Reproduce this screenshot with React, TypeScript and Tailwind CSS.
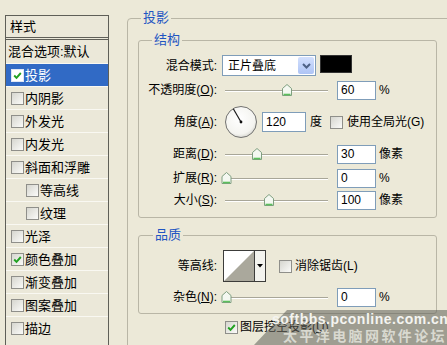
import React from 'react';

function Check({ checked, sel }: { checked?: boolean; sel?: boolean }) {
  return (
    <span className={sel ? 'flex w-[13px] h-[13px] shrink-0 items-center justify-center border border-[#dfe6f5] bg-white' : 'flex w-[13px] h-[13px] shrink-0 items-center justify-center border border-[#8f8f8a] bg-gradient-to-br from-[#d6d6cf] to-[#fbfbf9]'}>
      {checked && (
        <svg width="9" height="9" viewBox="0 0 9 9">
          <path d="M1.2 4.5 L3.5 6.8 L7.8 2" stroke="#21a121" strokeWidth="1.9" fill="none" />
        </svg>
      )}
    </span>
  );
}

function Slider({ pos }: { pos: number }) {
  const cx = pos;
  return (
    <svg width="113" height="22" viewBox="0 0 113 22" className="shrink-0">
      <line x1="5" y1="11.5" x2="108" y2="11.5" stroke="#a8a698" strokeWidth="1" />
      <line x1="5" y1="12.5" x2="108" y2="12.5" stroke="#ffffff" strokeWidth="1" />
      <polygon
        points={`${cx},5.5 ${cx + 4.5},9.5 ${cx + 4.5},16.5 ${cx - 4.5},16.5 ${cx - 4.5},9.5`}
        fill="#f4f8f1"
        stroke="#7f9f80"
        strokeWidth="1"
      />
      <line x1={cx - 3.5} y1="15.5" x2={cx + 3.5} y2="15.5" stroke="#5cbf5c" strokeWidth="1.6" />
    </svg>
  );
}

function Field({ v, w }: { v: string; w?: string }) {
  return (
    <div className={`${w ?? 'w-[39px] h-[19px]'} shrink-0 border border-[#7f9db9] bg-white flex items-center pl-[3px] text-[12px] leading-none`}>
      {v}
    </div>
  );
}

function Label({ children }: { children: React.ReactNode }) {
  return <div className="w-[78px] shrink-0 text-right text-[12px] leading-none whitespace-nowrap">{children}</div>;
}

const items: { t: string; c?: boolean; sel?: boolean; ind?: boolean }[] = [
  { t: '投影', c: true, sel: true },
  { t: '内阴影' },
  { t: '外发光' },
  { t: '内发光' },
  { t: '斜面和浮雕' },
  { t: '等高线', ind: true },
  { t: '纹理', ind: true },
  { t: '光泽' },
  { t: '颜色叠加', c: true },
  { t: '渐变叠加' },
  { t: '图案叠加' },
  { t: '描边' },
];

export default function App() {
  return (
    <div className="relative w-[447px] h-[345px] overflow-hidden bg-[#ece9d8] text-black font-['Liberation_Sans','Noto_Sans_CJK_SC',sans-serif] flex">
      {/* left list */}
      <div className="ml-[5px] mt-[15px] w-[104px] h-[340px] shrink-0 border border-[#5f5f58] bg-[#ebe8d9]">
        <div className="h-[21px] flex items-center pl-[4px] text-[13px] leading-none">样式</div>
        <div className="h-[3px] border-y border-[#5f5f58]" />
        <div className="h-[23px] flex items-center pl-[2px] text-[13px] leading-none whitespace-nowrap">混合选项:默认</div>
        {items.map((it) => (
          <div
            key={it.t}
            className={`h-[23px] flex items-center border-t border-[#f9f8f2] text-[13px] leading-none whitespace-nowrap ${it.ind ? 'pl-[20px]' : 'pl-[5px]'} ${it.sel ? 'bg-[#316ac5] text-white' : ''}`}
          >
            <Check checked={it.c} sel={it.sel} />
            <span className="ml-[1px]">{it.t}</span>
          </div>
        ))}
      </div>

      {/* right panel */}
      <div className="relative ml-[18px] mt-[18px] w-[340px] h-[340px] shrink-0 border border-[#b9b6a6] rounded-[4px] pl-[10px] pt-[21px]">
        <div className="absolute left-[13px] -top-[9px] px-[2px] bg-[#ece9d8] text-[13px] leading-[16px] text-[#1f56c2]">投影</div>

        {/* 结构 */}
        <div className="relative w-[299px] h-[178px] border border-[#b9b6a6] rounded-[3px] pt-[13px]">
          <div className="absolute left-[13px] -top-[9px] px-[2px] bg-[#ece9d8] text-[13px] leading-[16px] text-[#1f56c2]">结构</div>

          <div className="h-[23px] flex items-center">
            <Label>混合模式:</Label>
            <div className="ml-[5px] w-[94px] h-[21px] border border-[#7f9db9] bg-white flex items-stretch">
              <div className="flex-1 flex items-center pl-[5px] text-[12px] leading-none">正片叠底</div>
              <div className="m-[1px] w-[16px] flex items-center justify-center rounded-[2px] bg-gradient-to-b from-[#d3e0fd] to-[#aec4f5]">
                <svg width="9" height="6" viewBox="0 0 9 6">
                  <path d="M1 1 L4.5 4.5 L8 1" stroke="#4d6185" strokeWidth="2" fill="none" />
                </svg>
              </div>
            </div>
            <div className="ml-[4px] w-[32px] h-[18px] self-start mt-[1px] bg-black border border-[#333]" />
          </div>

          <div className="mt-[2px] h-[22px] flex items-center">
            <Label>
              不透明度(<span className="underline">O</span>):
            </Label>
            <div className="ml-[3px]">
              <Slider pos={67} />
            </div>
            <div className="ml-[4px]">
              <Field v="60" />
            </div>
            <span className="ml-[3px] text-[12px] leading-none">%</span>
          </div>

          <div className="mt-[4px] h-[34px] flex items-center">
            <Label>
              角度(<span className="underline">A</span>):
            </Label>
            <svg width="36" height="34" viewBox="0 0 36 34" className="ml-[6px] shrink-0">
              <defs>
                <radialGradient id="dg" cx="45%" cy="40%" r="65%">
                  <stop offset="0" stopColor="#ffffff" />
                  <stop offset="0.75" stopColor="#f4f4f0" />
                  <stop offset="1" stopColor="#cfcfc8" />
                </radialGradient>
              </defs>
              <circle cx="18" cy="17" r="15.5" fill="url(#dg)" stroke="#727270" strokeWidth="1" />
              <line x1="18" y1="17" x2="10.3" y2="3.7" stroke="#1a1a1a" strokeWidth="1.2" />
              <circle cx="18" cy="17" r="1.4" fill="#111" />
            </svg>
            <div className="ml-[3px]">
              <Field v="120" w="w-[44px] h-[20px]" />
            </div>
            <span className="ml-[4px] text-[12px] leading-none">度</span>
            <span className="ml-[8px]">
              <Check />
            </span>
            <span className="ml-[4px] text-[12px] leading-none whitespace-nowrap">使用全局光(G)</span>
          </div>

          <div className="mt-[4px] h-[22px] flex items-center">
            <Label>
              距离(<span className="underline">D</span>):
            </Label>
            <div className="ml-[3px]">
              <Slider pos={37} />
            </div>
            <div className="ml-[4px]">
              <Field v="30" />
            </div>
            <span className="ml-[3px] text-[12px] leading-none">像素</span>
          </div>

          <div className="mt-[2px] h-[22px] flex items-center">
            <Label>
              扩展(<span className="underline">R</span>):
            </Label>
            <div className="ml-[3px]">
              <Slider pos={6.5} />
            </div>
            <div className="ml-[4px]">
              <Field v="0" />
            </div>
            <span className="ml-[3px] text-[12px] leading-none">%</span>
          </div>

          <div className="h-[22px] flex items-center">
            <Label>
              大小(<span className="underline">S</span>):
            </Label>
            <div className="ml-[3px]">
              <Slider pos={49} />
            </div>
            <div className="ml-[4px]">
              <Field v="100" />
            </div>
            <span className="ml-[3px] text-[12px] leading-none">像素</span>
          </div>
        </div>

        {/* 品质 */}
        <div className="relative mt-[17px] w-[299px] h-[79px] border border-[#b9b6a6] rounded-[3px] pt-[14px]">
          <div className="absolute left-[14px] -top-[9px] px-[2px] bg-[#ece9d8] text-[13px] leading-[16px] text-[#1f56c2]">品质</div>
          <div className="h-[32px] flex items-center">
            <Label>等高线:</Label>
            <div className="ml-[6px] w-[43px] h-[32px] border border-[#3c3c3a] bg-white flex">
              <svg width="30" height="30" viewBox="0 0 30 30" className="shrink-0">
                <polygon points="0,30 30,0 30,30" fill="#aaa89c" />
              </svg>
              <div className="flex-1 border-l border-[#3c3c3a] flex items-center justify-center bg-[#f3f3ee]">
                <svg width="6" height="4" viewBox="0 0 6 4">
                  <polygon points="0,0 6,0 3,3.5" fill="#000" />
                </svg>
              </div>
            </div>
            <span className="ml-[13px]">
              <Check />
            </span>
            <span className="ml-[3px] text-[12px] leading-none whitespace-nowrap">消除锯齿(L)</span>
          </div>
          <div className="mt-[4px] h-[22px] flex items-center">
            <Label>
              杂色(<span className="underline">N</span>):
            </Label>
            <div className="ml-[3px]">
              <Slider pos={6.5} />
            </div>
            <div className="ml-[4px]">
              <Field v="0" />
            </div>
            <span className="ml-[3px] text-[12px] leading-none">%</span>
          </div>
        </div>

        <div className="mt-[6px] h-[14px] flex items-center pl-[87px]">
          <Check checked />
          <span className="ml-[2px] text-[12px] leading-none whitespace-nowrap">
            图层挖空投影(<span className="underline">U</span>)
          </span>
        </div>
      </div>

      {/* watermark overlay */}
      <svg width="447" height="345" viewBox="0 0 447 345" className="absolute inset-0 pointer-events-none">
        <polygon points="254,345 287,310 447,310 447,345" fill="rgba(95,95,88,0.55)" />
      </svg>
      <div className="absolute left-[272px] top-[311px] text-[14px] font-bold leading-[16px] tracking-[0.5px] text-[#f4f4f0] whitespace-nowrap pointer-events-none">
        softbbs.pconline.com.cn
      </div>
      <div className="absolute left-[283px] top-[328px] text-[14px] font-bold leading-[16px] tracking-[2.4px] text-[#d9d9d0] whitespace-nowrap pointer-events-none">
        太平洋电脑网软件论坛
      </div>
    </div>
  );
}
